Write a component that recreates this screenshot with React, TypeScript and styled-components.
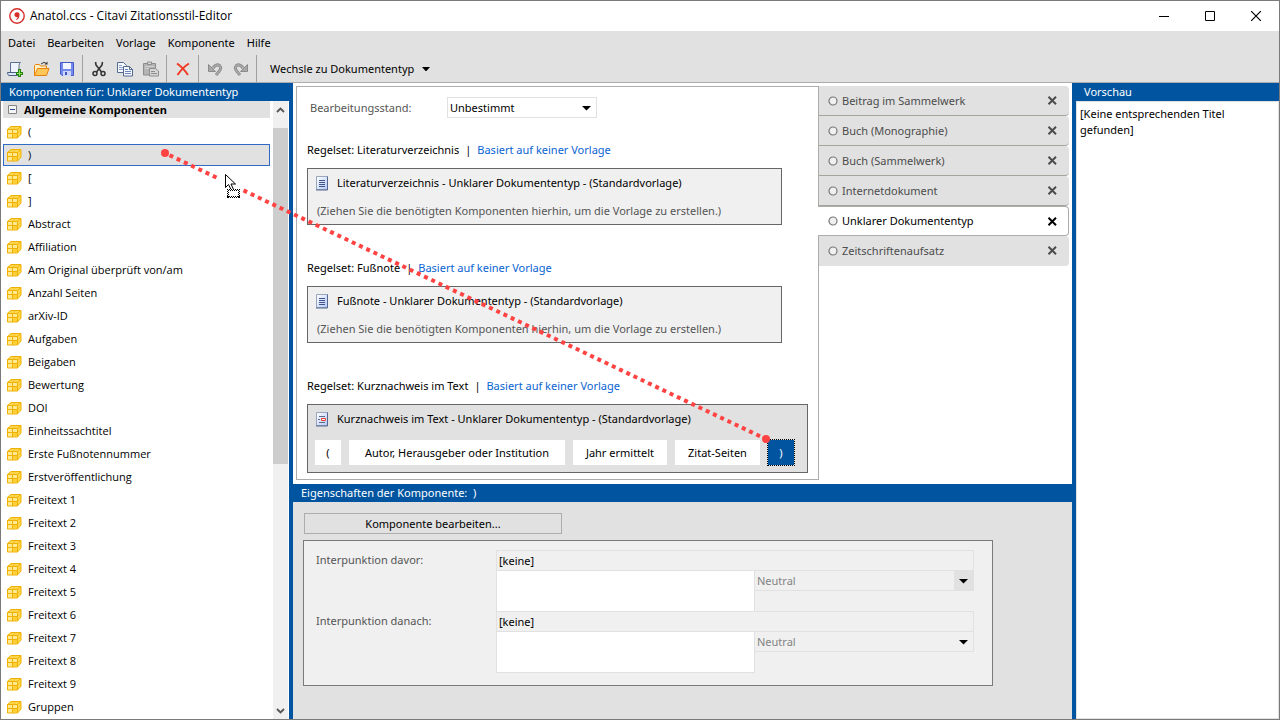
import React, { useState } from "react";
import styled, { createGlobalStyle, css } from "styled-components";

const blue = "#0054a0";
const grey = "#e1e1e1";
const pale = "#f0f0f0";

const GlobalStyle = createGlobalStyle`
  *, *::before, *::after { box-sizing: border-box; }
  body {
    margin: 0;
    background: #fff;
    color: #000;
    font: 11px/16px "Noto Sans", "Open Sans", sans-serif;
  }
  button, input, select, textarea {
    font: inherit;
    color: inherit;
    margin: 0;
    padding: 0;
    border: 0;
    border-radius: 0;
    background: none;
    outline: 0;
  }
  ul { margin: 0; padding: 0; list-style: none; }
`;

const Window = styled.div`
  position: relative;
  display: flex;
  flex-direction: column;
  min-height: 100vh;
  border: 1px solid #7a7a7a;
  overflow: hidden;
  white-space: nowrap;
`;

const TitleBar = styled.header`
  display: flex;
  align-items: center;
  height: 30px;
  padding-left: 8px;
  gap: 5px;
`;

const Title = styled.span`
  flex: 1;
  font-family: "Open Sans", "Noto Sans", sans-serif;
  font-size: 12px;
`;

const CaptionButtons = styled.div`
  display: flex;
`;

const CaptionButton = styled.button`
  display: flex;
  align-items: center;
  justify-content: center;
  width: 46px;
  height: 30px;
`;

const MenuBar = styled.nav`
  display: flex;
  align-items: center;
  gap: 12px;
  height: 24px;
  padding-left: 7px;
  background: ${grey};
`;

const ToolBar = styled.div`
  display: flex;
  align-items: center;
  height: 28px;
  padding-left: 1px;
  background: ${grey};
  border-bottom: 1px solid #acacac;
`;

const ToolButton = styled.button`
  display: flex;
  align-items: center;
  justify-content: center;
  width: 26px;
  height: 26px;
`;

const Separator = styled.span`
  width: 1px;
  height: 27px;
  margin: 0 3px 0 2px;
  background: #a0a0a0;
`;

const ToolDropDown = styled.button`
  display: flex;
  align-items: center;
  gap: 8px;
  padding-left: 10px;
`;

const Workspace = styled.div`
  display: flex;
  flex: 1;
`;

const PanelHeader = styled.h2`
  margin: 0;
  height: 18px;
  padding: 0 8px;
  font-size: 11px;
  line-height: 18px;
  font-weight: 400;
  color: #fff;
  background: ${blue};
`;

const Sidebar = styled.aside`
  display: flex;
  flex-direction: column;
  flex: 0 0 292px;
  border-right: 4px solid ${blue};
`;

const SidebarBody = styled.div`
  display: flex;
  flex: 1;
  padding-right: 1px;
`;

const ListArea = styled.div`
  flex: 1;
  padding: 0 3px 0 2px;
`;

const GroupHeader = styled.button`
  display: flex;
  align-items: center;
  gap: 7px;
  width: 100%;
  height: 17px;
  padding-left: 5px;
  font-weight: 700;
  background: ${grey};
`;

const ItemList = styled.ul`
  display: flex;
  flex-direction: column;
  gap: 1px;
  padding-top: 3px;
  font-family: "Open Sans", "Noto Sans", sans-serif;
`;

const ItemButton = styled.button<{ $selected: boolean }>`
  display: flex;
  align-items: center;
  gap: 6px;
  width: 100%;
  height: 22px;
  padding-left: 3px;
  text-align: left;
  border: 1px solid ${(p) => (p.$selected ? "#316ac5" : "transparent")};
  background: ${(p) => (p.$selected ? grey : "transparent")};
`;

const ScrollBar = styled.div`
  display: flex;
  flex-direction: column;
  width: 15px;
  background: ${pale};
`;

const ScrollArrow = styled.button`
  display: flex;
  align-items: center;
  justify-content: center;
  height: 17px;
`;

const ScrollTrack = styled.div`
  flex: 1;
  padding-top: 10px;
`;

const ScrollThumb = styled.div`
  height: 336px;
  background: #cdcdcd;
`;

const Center = styled.main`
  display: flex;
  flex-direction: column;
  flex: 1;
  min-width: 0;
`;

const EditorArea = styled.div`
  display: flex;
  height: 401px;
  padding: 3px 3px 4px;
`;

const EditorPanel = styled.section`
  flex: 1;
  border: 1px solid #acacac;
  padding: 10px;
`;

const StatusRow = styled.div`
  display: flex;
  align-items: center;
  padding-left: 3px;
  color: #555;
`;

const StatusLabel = styled.label`
  width: 137px;
`;

const SelectWrap = styled.div<{ $width?: number; $pressed?: boolean }>`
  position: relative;
  height: 21px;
  color: #000;
  ${(p) => (p.$width ? css`width: ${p.$width}px;` : css`flex: 1;`)}
  svg {
    position: absolute;
    right: 0;
    top: 0;
    pointer-events: none;
    background: ${(p) => (p.$pressed ? grey : "transparent")};
  }
`;

const Select = styled.select<{ $muted?: boolean }>`
  appearance: none;
  width: 100%;
  height: 21px;
  padding: 0 20px 0 2px;
  border: 1px solid #e1e1e1;
  color: ${(p) => (p.$muted ? "#838383" : "#000")};
  background: ${(p) => (p.$muted ? pale : "#fff")};
  opacity: 1;
`;

const RuleSet = styled.div`
  height: 118px;
  padding-top: 24px;
`;

const RuleSetTitle = styled.div`
  display: flex;
  gap: 6px;
  line-height: 16px;
  margin-bottom: 10px;
`;

const Link = styled.a`
  color: #0a64d2;
  text-decoration: none;
`;

const TemplateBox = styled.div<{ $active?: boolean }>`
  border: 1px solid #666;
  margin-right: ${(p) => (p.$active ? 0 : 26)}px;
  padding: 0 7px;
  background: ${(p) => (p.$active ? grey : pale)};
`;

const TemplateTitle = styled.div`
  display: flex;
  align-items: center;
  gap: 8px;
  height: 28px;
  padding-left: 1px;
`;

const Hint = styled.div`
  height: 27px;
  padding-left: 2px;
  line-height: 27px;
  color: #555;
`;

const Chips = styled.div`
  display: flex;
  gap: 8px;
  padding: 7px 0 7px;
`;

const Chip = styled.button<{ $width: number; $selected?: boolean }>`
  width: ${(p) => p.$width}px;
  height: 25px;
  background: ${(p) => (p.$selected ? blue : "#fff")};
  color: ${(p) => (p.$selected ? "#fff" : "#000")};
  outline: ${(p) => (p.$selected ? "1px dotted #000" : "0")};
`;

const TabList = styled.ul`
  flex: 0 0 250px;
`;

const Tab = styled.li<{ $active: boolean; $line: boolean }>`
  display: flex;
  align-items: center;
  height: 30px;
  padding: 0 11px 0 9px;
  color: #4c4c4c;
  background: ${grey};
  border-radius: 0 4px 4px 0;
  border-bottom: 1px solid ${(p) => (p.$line ? "#a5a59c" : grey)};
  ${(p) =>
    p.$active &&
    css`
      position: relative;
      margin-left: -1px;
      padding: 0 10px;
      color: #000;
      background: #fff;
      border: solid #acacac;
      border-width: 1px 1px 1px 0;
    `}
`;

const TabLabel = styled.button`
  display: flex;
  align-items: center;
  gap: 4px;
  flex: 1;
`;

const CloseButton = styled.button`
  display: flex;
  padding: 0;
`;

const Properties = styled.section`
  flex: 1;
  padding: 11px 10px;
  background: ${grey};
`;

const EditButton = styled.button`
  display: block;
  width: 258px;
  height: 21px;
  margin: 0 1px 6px;
  border: 1px solid #adadad;
  background: ${grey};
`;

const PunctuationBox = styled.div`
  max-width: 690px;
  height: 146px;
  padding: 9px 18px 9px 12px;
  border: 1px solid #7a7a7a;
  background: ${pale};
`;

const Field = styled.div`
  display: flex;
  height: 61px;
  color: #555;
`;

const FieldLabel = styled.label`
  width: 180px;
  padding-top: 2px;
`;

const FieldControls = styled.div`
  flex: 1;
  color: #000;
`;

const FieldValue = styled.input`
  display: block;
  width: 100%;
  height: 21px;
  padding: 0 2px;
  border: 1px solid #e1e1e1;
`;

const FieldRow = styled.div`
  display: flex;
  height: 42px;
  margin-top: -1px;
`;

const FieldText = styled.textarea`
  width: 259px;
  height: 42px;
  margin-right: -1px;
  border: 1px solid #e1e1e1;
  background: #fff;
  resize: none;
`;

const Preview = styled.aside`
  display: flex;
  flex-direction: column;
  flex: 0 0 207px;
  border-left: 4px solid ${blue};
`;

const PreviewText = styled.p`
  flex: 1;
  margin: 0;
  padding: 4px 3px;
  border: 1px solid ${grey};
  white-space: normal;
`;

const DragLayer = styled.svg`
  position: absolute;
  left: -1px;
  top: -1px;
  pointer-events: none;
`;

const CitaviLogo = () => (
  <svg width="16" height="16" viewBox="0 0 16 16">
    <circle cx="8" cy="8" r="7.200" fill="#fff" stroke="#d62f2b" strokeWidth="1.400" />
    <path d="M7.900 4.200a2.500 2.500 0 0 1 2.600 2.700c0 2.500-1.200 4.300-3.200 5.200l-.4-.7c1-.6 1.600-1.400 1.700-2.400A2.400 2.400 0 0 1 5.400 6.700 2.500 2.500 0 0 1 7.900 4.200z" fill="#d62f2b" />
  </svg>
);

const NewIcon = () => (
  <svg width="16" height="16" viewBox="0 0 16 16">
    <path d="M3.500 1.500h10q-1.500 1-1.500 3v7H3.500z" fill="#eef3fd" stroke="#5a7092" />
    <path d="M.5 11.500h9l1 3H2q-1.500-.5-1.500-3z" fill="#dce6fa" stroke="#4b5f85" />
    <path d="M11 8h3v3h2v3h-2v2h-3v-2H9v-3h2z" fill="#25820f" />
    <path d="M12 9h1v3h2v1h-2v2h-1v-2h-2v-1h2z" fill="#8ce05e" />
  </svg>
);

const OpenIcon = () => (
  <svg width="17" height="16" viewBox="0 0 17 16">
    <path d="M1.500 14.500v-10l1-1h4l1 1.500h6v9z" fill="#fff1c4" stroke="#e8820c" />
    <path d="M1.500 14.500l3-7h11.500l-2.500 7z" fill="#ffc75a" stroke="#e8820c" />
    <path d="M8 3q3-3 5.500-.5" fill="none" stroke="#333" />
    <path d="M11.500 3.500h3V.5z" fill="#333" />
  </svg>
);

const SaveIcon = () => (
  <svg width="16" height="16" viewBox="0 0 16 16">
    <path d="M1.500 1.500h13v13h-11.500l-1.500-1.500z" fill="#7389ee" stroke="#4759c9" />
    <path d="M4 2h8v6H4z" fill="#f3f6ff" />
    <path d="M4 10h8v5H4z" fill="#cbd6f8" />
    <path d="M6 11h2v3H6z" fill="#4254b8" />
  </svg>
);

const CutIcon = () => (
  <svg width="16" height="16" viewBox="0 0 16 16" fill="none" stroke="#333">
    <path d="M4.500 1l.5 3 5.500 7M11.500 1L11 4l-5.500 7" strokeWidth="1.600" />
    <circle cx="4" cy="12.500" r="2" strokeWidth="1.500" />
    <circle cx="12" cy="12.500" r="2" strokeWidth="1.500" />
  </svg>
);

const CopyIcon = () => (
  <svg width="16" height="16" viewBox="0 0 16 16" stroke="#56698f">
    <path d="M.5 1.500h6l3 3v7h-9z" fill="#f5f8ff" />
    <path d="M2 4.500h3M2 6.500h4M2 8.500h4" stroke="#8b9ec6" />
    <path d="M6.500 5.500h6l3 3v6.500h-9z" fill="#f5f8ff" />
    <path d="M12.500 5.500v3h3" fill="none" />
    <path d="M8 8.500h3M8 10.500h6M8 12.500h6" stroke="#6a84bd" />
  </svg>
);

const PasteIcon = () => (
  <svg width="16" height="16" viewBox="0 0 16 16" stroke="#8c8c8c">
    <path d="M.5 2.500h12v11.500h-12z" fill="#b4b4b4" />
    <path d="M4.500 1h4v2.500h-4z" fill="#d8d8d8" />
    <path d="M2 5.500h9M2 7.500h4" stroke="#d0d0d0" />
    <path d="M6.500 7.500h6l3 2.500v5h-9z" fill="#d6d6d6" />
    <path d="M8 10.500h4M8 12.500h6" />
  </svg>
);

const DeleteIcon = () => (
  <svg width="16" height="16" viewBox="0 0 16 16">
    <path d="M2 2.500q6 4 11 11.500M14 2.500Q8 6 2.500 14" fill="none" stroke="#f03a28" strokeWidth="2" />
  </svg>
);

const UndoIcon = ({ flip }: { flip?: boolean }) => (
  <svg width="16" height="16" viewBox="0 0 16 16">
    <g transform={flip ? "translate(15 0) scale(-1 1)" : "translate(1 0)"}>
      <path d="M5 7Q8.500 2.500 11.500 4.500q2.500 2.500-.5 6L8 14" fill="none" stroke="#8c8c8c" strokeWidth="3" />
      <path d="M5 7Q8.500 2.500 11.500 4.500q2.500 2.500-.5 6L8.500 13.500" fill="none" stroke="#adadad" strokeWidth="1.200" />
      <path d="M.5 3.500v7h7z" fill="#a8a8a8" stroke="#8c8c8c" />
    </g>
  </svg>
);

const CubeIcon = () => (
  <svg width="15" height="13" viewBox="0 0 15 13">
    <path d="M.5 3.500l3.500-3h10v7l-3.500 4.500H.5z" fill="#ffd84f" />
    <path d="M.5 3.500h10V12H.5z" fill="#ffe991" />
    <path d="M6 8h4v3.500H6z" fill="#ffcf38" />
    <path d="M.5 3.500l3.500-3h10v7.500l-3.500 4H.5zM.5 3.500h10V12M10.500 3.500L14 .5" fill="none" stroke="#efb000" />
    <path d="M5.500 4v8M1 7.500h9.500" fill="none" stroke="#efb000" />
    <path d="M5.500 3.500l3.500-3M10.500 7.500L14 4" fill="none" stroke="#f3bd25" strokeWidth=".7" />
  </svg>
);

const PageIcon = ({ accent }: { accent?: boolean }) => (
  <svg width="13" height="15" viewBox="0 0 13 15">
    <defs>
      <linearGradient id="page" x1="0" y1="0" x2="1" y2="1">
        <stop offset="0" stopColor="#fff" />
        <stop offset="1" stopColor="#b5c8fa" />
      </linearGradient>
    </defs>
    <path d="M.5.5h11v13H.5z" fill="url(#page)" stroke="#9aa6be" />
    <path d="M11.500.5v13.500H0" fill="none" stroke="#53688f" />
    {accent ? (
      <>
        <path d="M3 4.500h6M2 7.500h2M3 10.500h6" stroke="#5a6b92" />
        <path d="M5.500 6.500h4v2h-4z" fill="#fff" stroke="#e8402c" />
      </>
    ) : (
      <path d="M3 4.500h6M3 6.500h6M3 8.500h6M3 10.500h6" stroke="#3f5488" />
    )}
  </svg>
);

const DownArrow = () => (
  <svg width="8" height="4" viewBox="0 0 8 4">
    <path d="M0 0h8L4 4.500z" fill="#000" />
  </svg>
);

const SelectArrow = () => (
  <svg width="20" height="21" viewBox="0 0 20 21">
    <path d="M5 9h9l-4.500 4.500z" fill="#000" />
  </svg>
);

const Chevron = ({ up }: { up?: boolean }) => (
  <svg width="9" height="6" viewBox="0 0 9 6">
    <path d={up ? "M1 5l3.500-3.500L8 5" : "M1 1l3.500 3.500L8 1"} fill="none" stroke="#555" strokeWidth="1.800" />
  </svg>
);

const CollapseIcon = () => (
  <svg width="9" height="9" viewBox="0 0 9 9">
    <path d="M.5.5h8v8h-8z" fill="#f4f4f4" stroke="#848484" />
    <path d="M2 4.500h5" stroke="#2b4b8d" />
  </svg>
);

const StatusDot = () => (
  <svg width="10" height="10" viewBox="0 0 10 10">
    <circle cx="5" cy="5" r="4" fill="#f0f0f0" stroke="#777" strokeWidth="1.200" />
  </svg>
);

const CrossIcon = () => (
  <svg width="11" height="9" viewBox="0 0 11 9">
    <path d="M1.500.8l7.500 7.400M9 .8L1.500 8.200" fill="none" stroke="currentColor" strokeWidth="2" />
  </svg>
);

const components = [
  "(", ")", "[", "]", "Abstract", "Affiliation", "Am Original überprüft von/am",
  "Anzahl Seiten", "arXiv-ID", "Aufgaben", "Beigaben", "Bewertung", "DOI",
  "Einheitssachtitel", "Erste Fußnotennummer", "Erstveröffentlichung",
  "Freitext 1", "Freitext 2", "Freitext 3", "Freitext 4", "Freitext 5",
  "Freitext 6", "Freitext 7", "Freitext 8", "Freitext 9", "Gruppen",
];

const documentTypes = [
  "Beitrag im Sammelwerk", "Buch (Monographie)", "Buch (Sammelwerk)",
  "Internetdokument", "Unklarer Dokumententyp", "Zeitschriftenaufsatz",
];

const chips = [
  { text: "(", width: 26 },
  { text: "Autor, Herausgeber oder Institution", width: 216 },
  { text: "Jahr ermittelt", width: 94 },
  { text: "Zitat-Seiten", width: 85 },
  { text: ")", width: 26 },
];

const ruleSets = ["Literaturverzeichnis", "Fußnote", "Kurznachweis im Text"];

const PunctuationField = ({ id, label, pressed }: { id: string; label: string; pressed?: boolean }) => (
  <Field>
    <FieldLabel htmlFor={id}>{label}</FieldLabel>
    <FieldControls>
      <FieldValue id={id} defaultValue="[keine]" />
      <FieldRow>
        <FieldText aria-label={`${label} Text`} />
        <SelectWrap $pressed={pressed}>
          <Select $muted aria-label={`${label} Schriftstil`}>
            <option>Neutral</option>
          </Select>
          <SelectArrow />
        </SelectWrap>
      </FieldRow>
    </FieldControls>
  </Field>
);

export default function App() {
  const [selected, setSelected] = useState(1);
  const [tab, setTab] = useState(4);

  return (
    <>
      <GlobalStyle />
      <Window>
        <TitleBar>
          <CitaviLogo />
          <Title>Anatol.ccs - Citavi Zitationsstil-Editor</Title>
          <CaptionButtons>
            <CaptionButton aria-label="Minimieren">
              <svg width="10" height="10"><path d="M0 5.500h10" stroke="#000" /></svg>
            </CaptionButton>
            <CaptionButton aria-label="Maximieren">
              <svg width="10" height="10"><path d="M.5.5h9v9h-9z" fill="none" stroke="#000" /></svg>
            </CaptionButton>
            <CaptionButton aria-label="Schließen">
              <svg width="10" height="10"><path d="M0 0l10 10M10 0L0 10" stroke="#000" strokeWidth="1.200" /></svg>
            </CaptionButton>
          </CaptionButtons>
        </TitleBar>
        <MenuBar>
          {["Datei", "Bearbeiten", "Vorlage", "Komponente", "Hilfe"].map((m) => (
            <button key={m}>{m}</button>
          ))}
        </MenuBar>
        <ToolBar>
          <ToolButton aria-label="Neu"><NewIcon /></ToolButton>
          <ToolButton aria-label="Öffnen"><OpenIcon /></ToolButton>
          <ToolButton aria-label="Speichern"><SaveIcon /></ToolButton>
          <Separator />
          <ToolButton aria-label="Ausschneiden"><CutIcon /></ToolButton>
          <ToolButton aria-label="Kopieren"><CopyIcon /></ToolButton>
          <ToolButton aria-label="Einfügen"><PasteIcon /></ToolButton>
          <Separator />
          <ToolButton aria-label="Löschen"><DeleteIcon /></ToolButton>
          <Separator />
          <ToolButton aria-label="Rückgängig"><UndoIcon /></ToolButton>
          <ToolButton aria-label="Wiederholen"><UndoIcon flip /></ToolButton>
          <Separator />
          <ToolDropDown>
            Wechsle zu Dokumententyp
            <DownArrow />
          </ToolDropDown>
        </ToolBar>
        <Workspace>
          <Sidebar>
            <PanelHeader>Komponenten für: Unklarer Dokumententyp</PanelHeader>
            <SidebarBody>
              <ListArea>
                <GroupHeader>
                  <CollapseIcon />
                  Allgemeine Komponenten
                </GroupHeader>
                <ItemList>
                  {components.map((name, i) => (
                    <li key={name}>
                      <ItemButton $selected={i === selected} onClick={() => setSelected(i)}>
                        <CubeIcon />
                        {name}
                      </ItemButton>
                    </li>
                  ))}
                </ItemList>
              </ListArea>
              <ScrollBar>
                <ScrollArrow aria-label="Nach oben"><Chevron up /></ScrollArrow>
                <ScrollTrack><ScrollThumb /></ScrollTrack>
                <ScrollArrow aria-label="Nach unten"><Chevron /></ScrollArrow>
              </ScrollBar>
            </SidebarBody>
          </Sidebar>
          <Center>
            <EditorArea>
              <EditorPanel>
                <StatusRow>
                  <StatusLabel htmlFor="status">Bearbeitungsstand:</StatusLabel>
                  <SelectWrap $width={150}>
                    <Select id="status">
                      <option>Unbestimmt</option>
                    </Select>
                    <SelectArrow />
                  </SelectWrap>
                </StatusRow>
                {ruleSets.map((name, i) => (
                  <RuleSet key={name}>
                    <RuleSetTitle>
                      <span>Regelset: {name}</span>
                      <span>|</span>
                      <Link href="#vorlage">Basiert auf keiner Vorlage</Link>
                    </RuleSetTitle>
                    <TemplateBox $active={i === 2}>
                      <TemplateTitle>
                        <PageIcon accent={i === 2} />
                        {name} - Unklarer Dokumententyp - (Standardvorlage)
                      </TemplateTitle>
                      {i < 2 ? (
                        <Hint>(Ziehen Sie die benötigten Komponenten hierhin, um die Vorlage zu erstellen.)</Hint>
                      ) : (
                        <Chips>
                          {chips.map((c, n) => (
                            <Chip key={c.text} $width={c.width} $selected={n === 4}>{c.text}</Chip>
                          ))}
                        </Chips>
                      )}
                    </TemplateBox>
                  </RuleSet>
                ))}
              </EditorPanel>
              <TabList>
                {documentTypes.map((name, i) => (
                  <Tab key={name} $active={i === tab} $line={i < documentTypes.length - 1}>
                    <TabLabel onClick={() => setTab(i)}>
                      <StatusDot />
                      {name}
                    </TabLabel>
                    <CloseButton aria-label={`${name} schließen`}><CrossIcon /></CloseButton>
                  </Tab>
                ))}
              </TabList>
            </EditorArea>
            <PanelHeader>Eigenschaften der Komponente:&nbsp; )</PanelHeader>
            <Properties>
              <EditButton>Komponente bearbeiten...</EditButton>
              <PunctuationBox>
                <PunctuationField id="before" label="Interpunktion davor:" pressed />
                <PunctuationField id="after" label="Interpunktion danach:" />
              </PunctuationBox>
            </Properties>
          </Center>
          <Preview>
            <PanelHeader>Vorschau</PanelHeader>
            <PreviewText>[Keine entsprechenden Titel gefunden]</PreviewText>
          </Preview>
        </Workspace>
        <DragLayer width="800" height="480" viewBox="0 0 800 480">
          <g fill="none" stroke="#ff4343" strokeWidth="4">
            <path d="M169.500 155.200L218 178.300" strokeDasharray="4 4" />
            <path d="M243.500 190.400L762 437.200" strokeDasharray="4 4" />
          </g>
          <circle cx="165" cy="153" r="4" fill="#ff4343" />
          <circle cx="766" cy="439" r="4" fill="#ff4343" />
          <path d="M225.500 174.500v13l3-3 3 6 2-1-2.500-5.500h4.500z" fill="#fff" stroke="#000" />
          <path d="M227 189h13v9h-13z" fill="#fff" />
          <g stroke="#000" strokeDasharray="1 1" shapeRendering="crispEdges">
            <path d="M227 189.500h13M228 190.500h12M227 196.500h13M228 197.500h12" />
            <path d="M227.500 189v9M228.500 190v7M238.500 190v7M239.500 189v9" />
          </g>
        </DragLayer>
      </Window>
    </>
  );
}
